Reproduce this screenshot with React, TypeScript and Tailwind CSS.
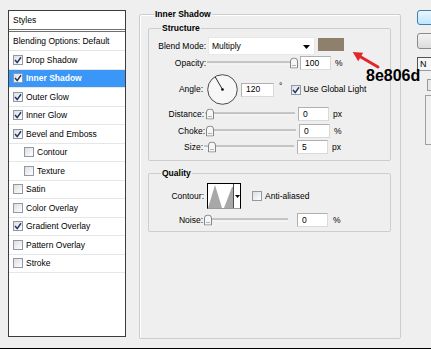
import React from 'react';

type StyleItem = { label: string; on?: boolean; active?: boolean; sub?: boolean };

const styleItems: StyleItem[] = [
  { label: 'Drop Shadow', on: true },
  { label: 'Inner Shadow', on: true, active: true },
  { label: 'Outer Glow', on: true },
  { label: 'Inner Glow', on: true },
  { label: 'Bevel and Emboss', on: true },
  { label: 'Contour', sub: true },
  { label: 'Texture', sub: true },
  { label: 'Satin' },
  { label: 'Color Overlay' },
  { label: 'Gradient Overlay', on: true },
  { label: 'Pattern Overlay' },
  { label: 'Stroke' },
];

function Check({ on }: { on?: boolean }) {
  return (
    <span className="flex h-[10px] w-[10px] shrink-0 items-center justify-center border border-[#8e99a5] bg-gradient-to-br from-[#dedede] to-white">
      {on && (
        <svg width="8" height="8" viewBox="0 0 8 8">
          <path d="M1 4 L3.2 6.6 L7 1.2" fill="none" stroke="#23386a" strokeWidth="1.5" />
        </svg>
      )}
    </span>
  );
}

function Label({ children }: { children: React.ReactNode }) {
  return <span className="w-[57px] shrink-0 text-right">{children}</span>;
}

function Slider({ thumb, width = 90 }: { thumb: number; width?: number }) {
  return (
    <div className="relative ml-[1px] h-full shrink-0" style={{ width }}>
      <div className="absolute top-1/2 right-0 left-0 h-[3px] -translate-y-1/2 border-t border-b border-t-[#a3a3a3] border-b-white bg-[#e2e2e2]" />
      <svg
        className="absolute top-1/2 -translate-y-1/2"
        style={{ left: thumb }}
        width="8"
        height="11"
        viewBox="0 0 8 11"
      >
        <path d="M0.5 10.5 V3.5 Q0.5 0.5 4 0.5 Q7.5 0.5 7.5 3.5 V10.5 Z" fill="#f6f6f6" stroke="#858585" />
        <path d="M2 8 H6" stroke="#b4b4b4" />
      </svg>
    </div>
  );
}

function Field({ value, w = 31, ml = 3 }: { value: string; w?: number; ml?: number }) {
  return (
    <div
      className="flex h-[14px] shrink-0 items-center border border-[#dadada] border-t-[#b0b0b0] border-l-[#b0b0b0] bg-white pl-[4px]"
      style={{ width: w, marginLeft: ml }}
    >
      {value}
    </div>
  );
}

function Group({ title, className, children }: { title: string; className: string; children: React.ReactNode }) {
  return (
    <div className={`relative rounded-[2px] border border-[#cdcdcd] ${className}`}>
      <span className="absolute top-[-6px] left-[12px] bg-[#efefef] px-[1px] leading-[10px] font-bold">{title}</span>
      {children}
    </div>
  );
}

export default function App() {
  return (
    <div className="relative flex h-[349px] w-[431px] items-start overflow-hidden border-b border-black bg-[#efefef] font-['Liberation_Sans',Arial,sans-serif] text-[8.5px] leading-none text-black">
      {/* styles list */}
      <div className="mt-[10px] ml-[8px] h-[327px] w-[118px] shrink-0 border border-[#3c3c3c] bg-white">
        <div className="flex h-[19px] items-center border-b border-[#6e6e6e] pl-[4px]">Styles</div>
        <div className="h-[2px] border-b border-[#6e6e6e]" />
        <div className="flex h-[19px] items-center border-b border-[#e4e4e4] pl-[4px]">Blending Options: Default</div>
        {styleItems.map((s) => (
          <div
            key={s.label}
            className={`flex h-[18.5px] items-center gap-[3px] border-b border-[#e6e6e6] ${s.sub ? 'pl-[15px]' : 'pl-[4px]'} ${
              s.active ? 'bg-[#3a96f7] font-bold text-white' : ''
            }`}
          >
            <Check on={s.on} />
            <span>{s.label}</span>
          </div>
        ))}
      </div>

      {/* Inner Shadow panel */}
      <div className="relative mt-[14px] ml-[13px] h-[325px] w-[262px] shrink-0 rounded-[2px] border border-[#cdcdcd] shadow-[inset_1px_1px_0_#fff]">
        <span className="absolute top-[-6px] left-[14px] bg-[#efefef] px-[1px] leading-[10px] font-bold">Inner Shadow</span>

        <Group title="Structure" className="mt-[13px] ml-[8px] h-[133px] w-[243px]">
          <div className="mt-[8px] flex h-[18px] items-center">
            <Label>Blend Mode:</Label>
            <div className="relative ml-[2px] flex h-full w-[107px] items-center border border-[#e8e8e8] bg-white pl-[3px]">
              Multiply
              <svg className="absolute top-[7px] right-[4px]" width="7" height="4" viewBox="0 0 7 4">
                <path d="M0 0 H7 L3.5 4 Z" fill="#000" />
              </svg>
            </div>
            <div className="mt-[-4px] ml-[3px] h-[13px] w-[26px] bg-[#8e806d]" />
          </div>

          <div className="flex h-[16px] items-center">
            <Label>Opacity:</Label>
            <Slider thumb={83} />
            <Field value="100" />
            <span className="ml-[4px]">%</span>
          </div>

          <div className="mt-[3px] flex h-[31px] items-center">
            <span className="w-[54px] shrink-0 text-right">Angle:</span>
            <svg className="ml-[4px] shrink-0" width="31" height="31" viewBox="0 0 31 31">
              <circle cx="15.5" cy="15.5" r="14.8" fill="#f7f7f7" stroke="#4a4a4a" strokeWidth="1" />
              <path d="M15.5 15.5 L8.2 2.9" stroke="#2a2a2a" strokeWidth="1" />
              <circle cx="15.5" cy="15.5" r="1.3" fill="#000" />
            </svg>
            <Field value="120" w={33} ml={3} />
            <span className="mt-[-6px] ml-[5px]">°</span>
            <span className="ml-[9px]">
              <Check on />
            </span>
            <span className="ml-[2px]">Use Global Light</span>
          </div>

          <div className="mt-[2px] flex h-[14px] items-center">
            <span className="w-[55px] shrink-0 text-right">Distance:</span>
            <Slider thumb={1} />
            <Field value="0" />
            <span className="ml-[4px]">px</span>
          </div>
          <div className="mt-[3px] flex h-[14px] items-center">
            <span className="w-[56px] shrink-0 text-right">Choke:</span>
            <Slider thumb={0} />
            <Field value="0" />
            <span className="ml-[4px]">%</span>
          </div>
          <div className="mt-[2px] flex h-[14px] items-center">
            <span className="w-[54px] shrink-0 text-right">Size:</span>
            <Slider thumb={4} />
            <Field value="5" />
            <span className="ml-[4px]">px</span>
          </div>
        </Group>

        <Group title="Quality" className="mt-[12px] ml-[8px] h-[59px] w-[243px]">
          <div className="mt-[9px] flex h-[26px] items-center">
            <span className="w-[55px] shrink-0 text-right">Contour:</span>
            <div className="ml-[3px] flex h-[26px] w-[34px] shrink-0 border border-black border-b-[#9a9a9a] bg-white">
              <svg width="25" height="24" viewBox="0 0 25 24">
                <path d="M0 24 L7 1 L14 24 Z" fill="#a8a8a8" />
                <path d="M16 24 L24 3 L25 3 L25 24 Z" fill="#a8a8a8" />
              </svg>
              <div className="flex w-[7px] items-center justify-center border-l border-[#4a4a4a]">
                <svg width="5" height="3" viewBox="0 0 5 3">
                  <path d="M0 0 H5 L2.5 3 Z" fill="#000" />
                </svg>
              </div>
            </div>
            <span className="ml-[11px]">
              <Check />
            </span>
            <span className="ml-[3px]">Anti-aliased</span>
          </div>
          <div className="mt-[4px] flex h-[14px] items-center">
            <span className="w-[54px] shrink-0 text-right">Noise:</span>
            <Slider thumb={0} width={84} />
            <Field value="0" ml={9} />
            <span className="ml-[5px]">%</span>
          </div>
        </Group>
      </div>

      {/* dialog buttons, cut off at the right edge */}
      <div className="mt-[10px] ml-[16px] flex w-[80px] shrink-0 flex-col gap-[8px]">
        <div className="h-[15px] rounded-[3px] border border-[#3c7fb1] bg-gradient-to-b from-[#eaf6fd] to-[#bee6fd]" />
        <div className="h-[16px] rounded-[3px] border border-[#8a8a8a] bg-gradient-to-b from-[#f4f4f4] to-[#dcdcdc]" />
        <div className="flex h-[14px] items-center border border-[#9a9a9a] border-t-[#555] border-l-[#555] bg-[#f6f6f6] pl-[2px] text-[9px]">
          N
        </div>
        <div className="ml-[10px] h-[12px] w-[12px] border border-[#9a9a9a] bg-[#e8e8e8]" />
        <div className="mt-[-4px] ml-[8px] h-[50px] w-[60px] border border-[#a0a0a0]" />
      </div>

      {/* annotation */}
      <svg className="absolute top-[48px] left-[348px]" width="34" height="24" viewBox="0 0 34 24">
        <path d="M12 8.5 L30 19" stroke="#e3262c" strokeWidth="3" strokeLinecap="round" />
        <path d="M4.7 4 L10.2 13.3 L15.2 4.7 Z" fill="#e3262c" />
      </svg>
      <span className="absolute top-[68px] left-[366px] text-[16px] leading-none font-bold">8e806d</span>
    </div>
  );
}
